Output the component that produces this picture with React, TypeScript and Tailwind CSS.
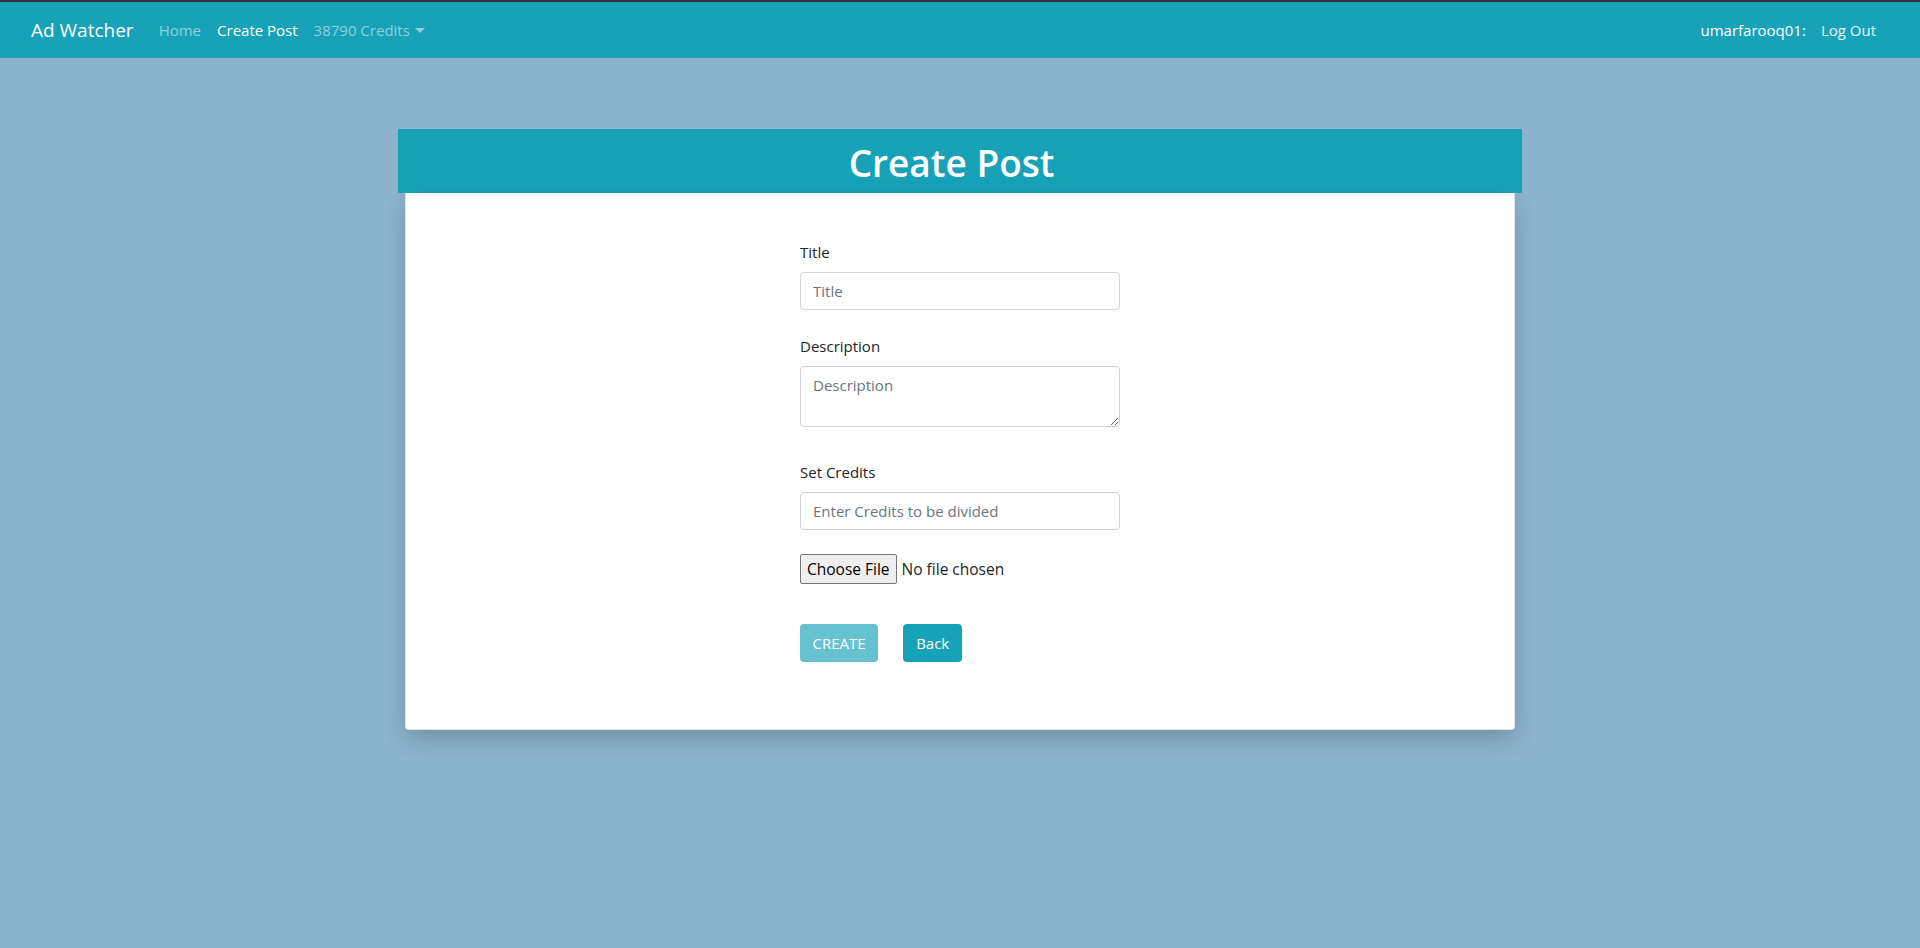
export default function App() {
  return (
    <div className="min-h-[948px] bg-[#8db4cd] font-['Open_Sans',sans-serif] text-[#212529]">
      <nav className="flex h-[58px] items-center border-t-2 border-[#2e3338] bg-[#17a2b8] pl-[31px] pr-[44px]">
        <span className="mr-[17px] text-[19px] leading-[30px] text-white">Ad Watcher</span>
        <div className="flex items-center text-[15px] leading-[24px]">
          <a className="px-[8px] text-white/50">Home</a>
          <a className="px-[8px] text-white">Create Post</a>
          <a className="flex items-center px-[8px] text-white/50">
            38790 Credits
            <span className="ml-[5px] h-0 w-0 border-x-[5px] border-t-[5px] border-x-transparent border-t-white/50" />
          </a>
        </div>
        <div className="ml-auto flex items-center gap-[15px] text-[15px] leading-[24px]">
          <span className="text-white">umarfarooq01:</span>
          <a className="text-white/90">Log Out</a>
        </div>
      </nav>

      <main className="pt-[71px]">
        <div className="mx-auto w-[1110px]">
          <div className="-mx-[7px] flex h-[64px] items-center justify-center bg-[#17a2b8] pr-[17px] pt-[3px]">
            <h1 className="text-[37px] font-semibold leading-[48px] text-white">Create Post</h1>
          </div>
          <div className="rounded-b-[4px] border border-t-0 border-black/10 bg-white pb-[67px] pt-[47px] shadow-[0_10px_24px_rgba(0,0,0,0.18)]">
            <form className="mx-auto w-[320px] text-[15px]">
              <label className="mb-[8px] block leading-[24px]">Title</label>
              <input
                placeholder="Title"
                className="block h-[38px] w-full rounded-[4px] border border-[#ced4da] px-[12px] leading-[24px] placeholder:text-[#6c757d]"
              />

              <label className="mb-[8px] mt-[24px] block leading-[24px]">Description</label>
              <textarea
                rows={2}
                placeholder="Description"
                className="block h-[61px] w-full rounded-[4px] border border-[#ced4da] px-[12px] py-[6px] leading-[24px] placeholder:text-[#6c757d]"
              />

              <label className="mb-[8px] mt-[33px] block leading-[24px]">Set Credits</label>
              <input
                placeholder="Enter Credits to be divided"
                className="block h-[38px] w-full rounded-[4px] border border-[#ced4da] px-[12px] leading-[24px] placeholder:text-[#6c757d]"
              />

              <input
                type="file"
                className="mt-[24px] block w-full text-[15.5px] leading-[22px] file:mr-[5px] file:rounded-[2px] file:border file:border-[#767676] file:bg-[#efefef] file:px-[6px] file:py-[3px] file:text-black"
              />

              <div className="mt-[40px] flex gap-[25px]">
                <button
                  type="button"
                  disabled
                  className="h-[38px] rounded-[4px] bg-[#17a2b8] px-[12.5px] leading-[24px] text-white opacity-65"
                >
                  CREATE
                </button>
                <button
                  type="button"
                  className="h-[38px] rounded-[4px] bg-[#17a2b8] px-[13px] leading-[24px] text-white"
                >
                  Back
                </button>
              </div>
            </form>
          </div>
        </div>
      </main>
    </div>
  )
}
